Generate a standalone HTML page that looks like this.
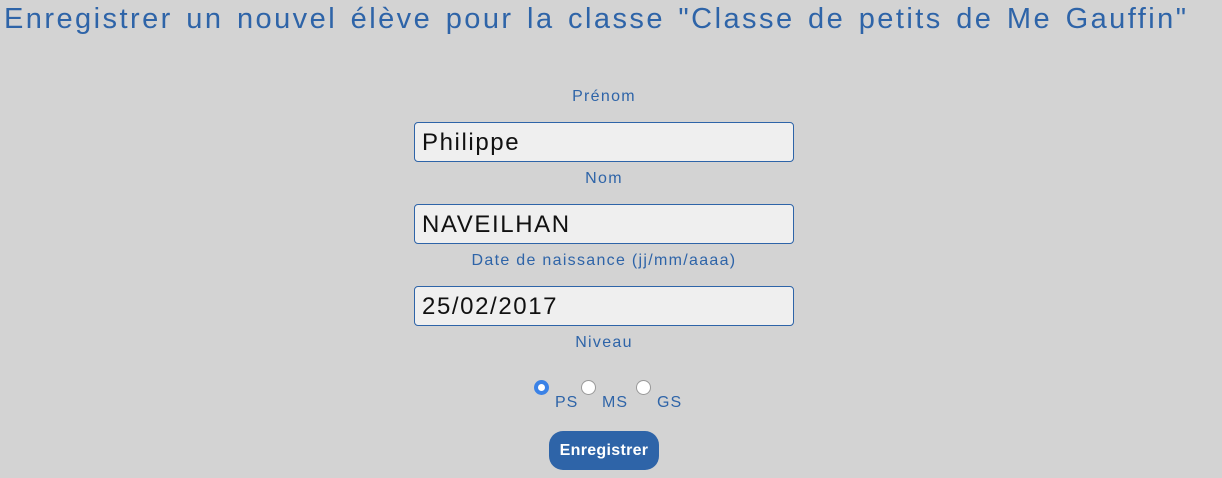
<!DOCTYPE html>
<html><head><meta charset="utf-8"><style>
body{margin:0;width:1222px;height:478px;background:#d3d3d3;font-family:"Liberation Sans",sans-serif;color:#2e64a8;position:relative;overflow:hidden}
h1{position:absolute;left:0;top:3px;width:1222px;margin:0;font-weight:normal;font-size:29px;white-space:nowrap;text-align:left;padding-left:4px;letter-spacing:2.45px;word-spacing:3px}
.lbl{position:absolute;width:1222px;text-align:center;font-size:16px;letter-spacing:1.3px}
.inp{position:absolute;left:414px;width:380px;height:40px;background:#efefef;border:1px solid #2e64a8;border-radius:4px;font-size:24px;color:#111;box-sizing:border-box;padding-left:7px;line-height:39px;letter-spacing:1.6px}
.r{position:absolute;width:15px;height:15px;border-radius:50%;background:#fff;border:1px solid #999;box-sizing:border-box}
.r.on{border:4px solid #3b82e6}
.t{position:absolute;font-size:16px;letter-spacing:1px}
.btn{position:absolute;left:549px;top:431px;width:110px;height:39px;border-radius:14px;background:#2e64a8;color:#fff;font-weight:bold;font-size:16px;text-align:center;line-height:39px;letter-spacing:0.3px}
</style></head><body>
<h1>Enregistrer un nouvel élève pour la classe "Classe de petits de Me Gauffin"</h1>
<div class="lbl" style="top:88px;left:-7px">Prénom</div>
<div class="inp" style="top:122px">Philippe</div>
<div class="lbl" style="top:170px;left:-7px">Nom</div>
<div class="inp" style="top:204px">NAVEILHAN</div>
<div class="lbl" style="top:252px;left:-7px">Date de naissance (jj/mm/aaaa)</div>
<div class="inp" style="top:286px">25/02/2017</div>
<div class="lbl" style="top:334px;left:-7px">Niveau</div>
<div class="r on" style="left:534px;top:380px"></div>
<div class="t" style="left:555px;top:394px">PS</div>
<div class="r" style="left:581px;top:380px"></div>
<div class="t" style="left:602px;top:394px">MS</div>
<div class="r" style="left:636px;top:380px"></div>
<div class="t" style="left:657px;top:394px">GS</div>
<div class="btn">Enregistrer</div>
</body></html>
